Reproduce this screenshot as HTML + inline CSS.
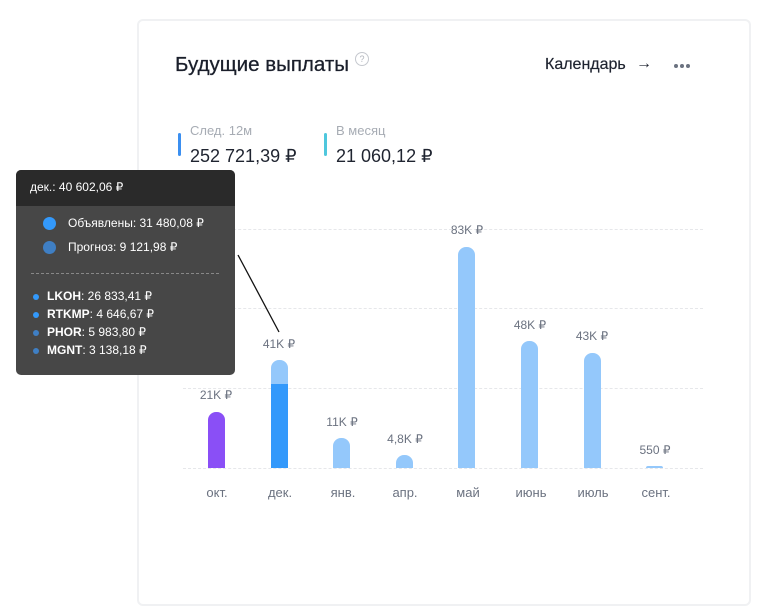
<!DOCTYPE html>
<html><head><meta charset="utf-8"><style>
*{margin:0;padding:0;box-sizing:border-box}
body{width:758px;height:612px;background:#fff;font-family:"Liberation Sans",sans-serif;position:relative;overflow:hidden;color:#1f2430}
.card{position:absolute;left:137px;top:19px;width:614px;height:587px;border:2px solid #f0f1f3;border-radius:6px;background:#fff}
.a{position:absolute;white-space:nowrap}
.grid{position:absolute;left:183px;width:520px;border-top:1px dashed #e6e7ea}
.bar{position:absolute;width:17px;border-radius:8px 8px 0 0;background:#94c8fb}
.lbl{position:absolute;font-size:12px;color:#6b7280;transform:translateX(-50%)}
.mon{position:absolute;top:485px;font-size:13px;color:#6b7280;transform:translateX(-50%)}
.tip{position:absolute;left:16px;top:170px;width:219px;height:205px;background:#474747;border-radius:5px;overflow:hidden;color:#fff;font-size:12px}
.tip .h{height:36px;background:#2a2a2a;padding:10px 0 0 14px}
.dot{position:absolute;border-radius:50%}
</style></head><body>
<div class="card"></div>
<div class="a" style="left:175px;top:53px;font-size:20.5px;color:#1a1f2b;-webkit-text-stroke:0.3px #1a1f2b">Будущие выплаты</div>
<div class="a" style="left:355px;top:52px;width:14px;height:14px;border:1px solid #c5c8ce;border-radius:50%;font-size:9px;color:#b0b4bb;text-align:center;line-height:12px">?</div>
<div class="a" style="left:545px;top:56px;font-size:16px;color:#1f2430;-webkit-text-stroke:0.2px #1f2430">Календарь</div>
<div class="a" style="left:636px;top:55px;font-size:16px;font-weight:bold">→</div>
<div class="dot" style="left:674px;top:64px;width:4px;height:4px;background:#6b7280"></div>
<div class="dot" style="left:680px;top:64px;width:4px;height:4px;background:#6b7280"></div>
<div class="dot" style="left:686px;top:64px;width:4px;height:4px;background:#6b7280"></div>
<div class="a" style="left:178px;top:133px;width:3px;height:23px;background:#3b8ff0;border-radius:2px"></div>
<div class="a" style="left:190px;top:123px;font-size:13px;color:#a7acb4">След. 12м</div>
<div class="a" style="left:190px;top:146px;font-size:18px;color:#1f2430">252 721,39 ₽</div>
<div class="a" style="left:324px;top:133px;width:3px;height:23px;background:#4fc7dd;border-radius:2px"></div>
<div class="a" style="left:336px;top:123px;font-size:13px;color:#a7acb4">В месяц</div>
<div class="a" style="left:336px;top:146px;font-size:18px;color:#1f2430">21 060,12 ₽</div>

<div class="grid" style="top:229px"></div>
<div class="grid" style="top:308px"></div>
<div class="grid" style="top:388px"></div>
<div class="grid" style="top:468px"></div>

<div class="bar" style="left:208px;top:412px;height:56px;background:#8a4ff6"></div>
<div class="bar" style="left:271px;top:360px;height:108px"></div>
<div class="a" style="left:271px;top:384px;width:17px;height:84px;background:#3399fb"></div>
<div class="bar" style="left:333px;top:438px;height:30px"></div>
<div class="bar" style="left:396px;top:455px;height:13px"></div>
<div class="bar" style="left:458px;top:247px;height:221px"></div>
<div class="bar" style="left:521px;top:341px;height:127px"></div>
<div class="bar" style="left:584px;top:353px;height:115px"></div>
<div class="bar" style="left:646px;top:466px;height:2px"></div>

<div class="lbl" style="left:216px;top:388px">21K ₽</div>
<div class="lbl" style="left:279px;top:337px">41K ₽</div>
<div class="lbl" style="left:342px;top:415px">11K ₽</div>
<div class="lbl" style="left:405px;top:432px">4,8K ₽</div>
<div class="lbl" style="left:467px;top:223px">83K ₽</div>
<div class="lbl" style="left:530px;top:318px">48K ₽</div>
<div class="lbl" style="left:592px;top:329px">43K ₽</div>
<div class="lbl" style="left:655px;top:443px">550 ₽</div>

<div class="mon" style="left:217px">окт.</div>
<div class="mon" style="left:280px">дек.</div>
<div class="mon" style="left:343px">янв.</div>
<div class="mon" style="left:405px">апр.</div>
<div class="mon" style="left:468px">май</div>
<div class="mon" style="left:531px">июнь</div>
<div class="mon" style="left:593px">июль</div>
<div class="mon" style="left:656px">сент.</div>

<svg class="a" style="left:0;top:0" width="758" height="612"><line x1="238" y1="255" x2="279" y2="332" stroke="#111" stroke-width="1.3"/></svg>

<div class="tip">
<div class="h">дек.: 40 602,06 ₽</div>
<div class="dot" style="left:27px;top:47px;width:13px;height:13px;background:#3399fb"></div>
<div class="a" style="left:52px;top:46px">Объявлены: 31 480,08 ₽</div>
<div class="dot" style="left:27px;top:71px;width:13px;height:13px;background:#3f7fc4"></div>
<div class="a" style="left:52px;top:70px">Прогноз: 9 121,98 ₽</div>
<div class="a" style="left:15px;top:103px;width:188px;border-top:1px dashed #888"></div>
<div class="dot" style="left:17px;top:124px;width:6px;height:6px;background:#3399fb"></div>
<div class="a" style="left:31px;top:119px"><b>LKOH</b>: 26 833,41 ₽</div>
<div class="dot" style="left:17px;top:142px;width:6px;height:6px;background:#3399fb"></div>
<div class="a" style="left:31px;top:137px"><b>RTKMP</b>: 4 646,67 ₽</div>
<div class="dot" style="left:17px;top:160px;width:6px;height:6px;background:#3f7fc4"></div>
<div class="a" style="left:31px;top:155px"><b>PHOR</b>: 5 983,80 ₽</div>
<div class="dot" style="left:17px;top:178px;width:6px;height:6px;background:#3f7fc4"></div>
<div class="a" style="left:31px;top:173px"><b>MGNT</b>: 3 138,18 ₽</div>
</div>
</body></html>
